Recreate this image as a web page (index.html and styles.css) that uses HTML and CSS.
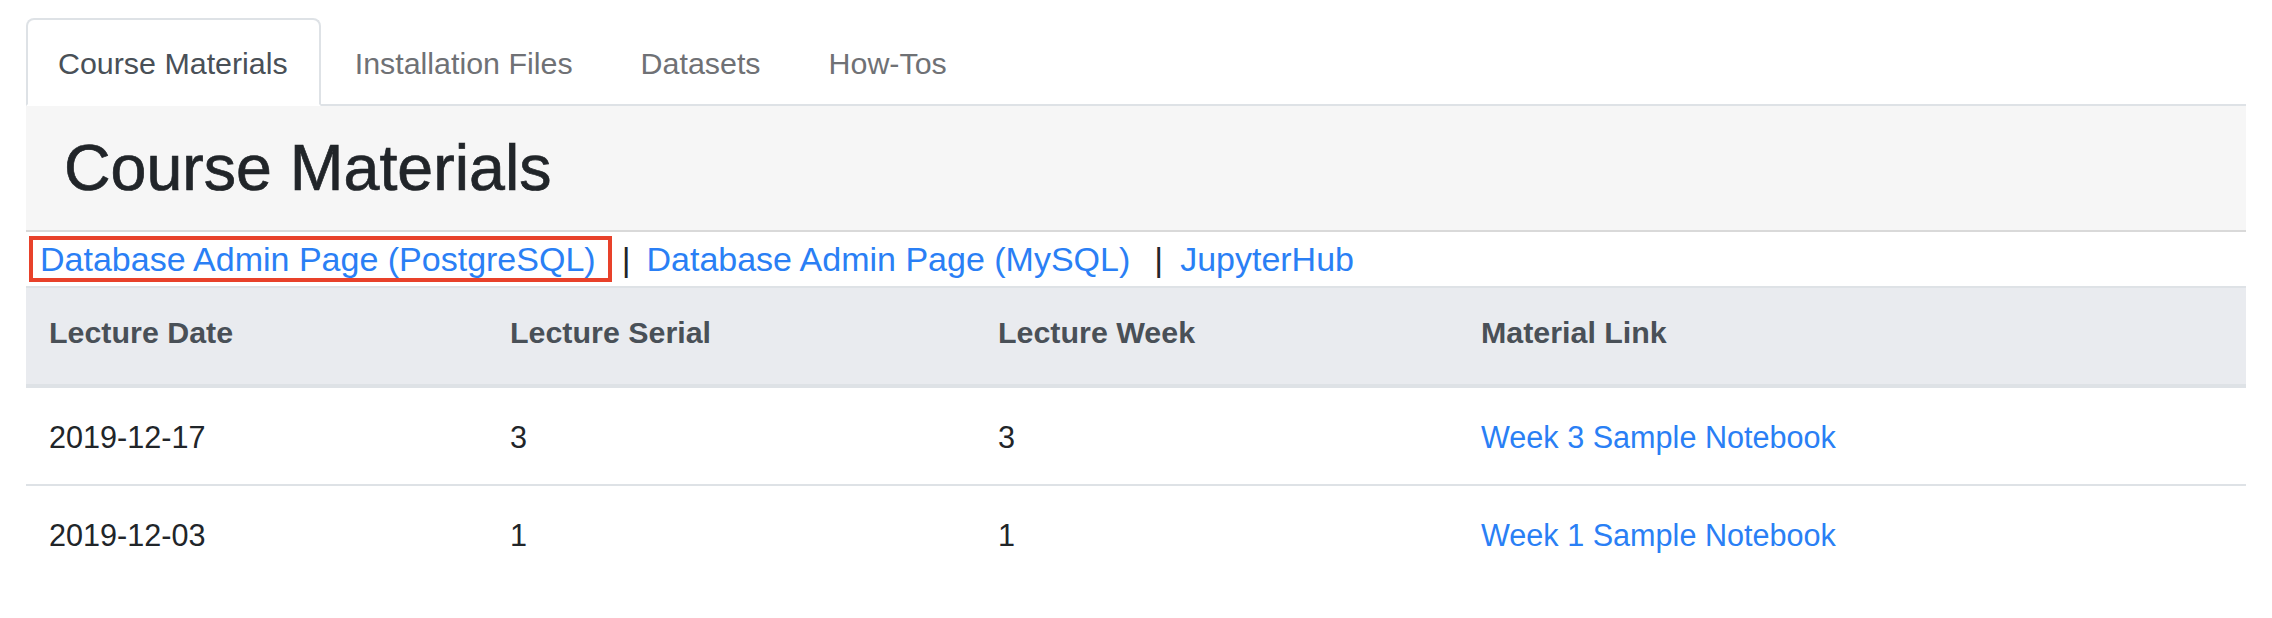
FILE: index.html
```html
<!DOCTYPE html>
<html lang="en">
<head>
<meta charset="utf-8">
<title>Course Materials</title>
<link rel="stylesheet" href="styles.css">
</head>
<body>
<div class="page">
  <ul class="tabs">
    <li class="tab"><a class="tab-link active" href="#">Course Materials</a></li>
    <li class="tab"><a class="tab-link" href="#">Installation Files</a></li>
    <li class="tab"><a class="tab-link" href="#">Datasets</a></li>
    <li class="tab"><a class="tab-link" href="#">How-Tos</a></li>
  </ul>
  <div class="jumbo">
    <h1 class="jumbo-title">Course Materials</h1>
  </div>
  <div class="links">
    <span class="highlight"><a class="link" href="#">Database Admin Page (PostgreSQL)</a></span>
    <span class="sep sep-first">|</span>
    <a class="link" href="#">Database Admin Page (MySQL)</a>
    <span class="sep">|</span>
    <a class="link" href="#">JupyterHub</a>
  </div>
  <table class="materials">
    <colgroup>
      <col class="c-date">
      <col class="c-serial">
      <col class="c-week">
      <col class="c-link">
    </colgroup>
    <thead>
      <tr>
        <th>Lecture Date</th>
        <th>Lecture Serial</th>
        <th>Lecture Week</th>
        <th>Material Link</th>
      </tr>
    </thead>
    <tbody>
      <tr>
        <td>2019-12-17</td>
        <td>3</td>
        <td>3</td>
        <td><a class="cell-link" href="#">Week 3 Sample Notebook</a></td>
      </tr>
      <tr>
        <td>2019-12-03</td>
        <td>1</td>
        <td>1</td>
        <td><a class="cell-link" href="#">Week 1 Sample Notebook</a></td>
      </tr>
    </tbody>
  </table>
</div>
</body>
</html>
```
FILE: styles.css
```css
* { box-sizing: border-box; }
html, body {
  margin: 0;
  padding: 0;
  background: #ffffff;
}
body {
  font-family: "Liberation Sans", Arial, sans-serif;
  font-size: 30.4px;
  color: #212529;
}
.page {
  padding: 18px 26px 0 26px;
}
.tabs {
  list-style: none;
  margin: 0;
  padding: 0;
  display: flex;
  border-bottom: 2px solid #dee2e6;
}
.tab {
  margin-bottom: -2px;
}
.tab-link {
  display: block;
  padding: 21px 32px 19px 32px;
  line-height: 44px;
  border: 2px solid transparent;
  border-radius: 8px 8px 0 0;
  color: #6f7175;
  text-decoration: none;
}
.tab-link.active {
  color: #495057;
  background: #ffffff;
  border-color: #dee2e6 #dee2e6 #ffffff;
  padding-left: 30px;
  padding-right: 31px;
}
.jumbo {
  background: #f6f6f6;
  border-bottom: 2px solid #d9d9d9;
  padding: 24px 38px;
}
.jumbo-title {
  margin: 0;
  font-size: 64.5px;
  font-weight: 500;
  line-height: 76px;
  color: #212529;
  -webkit-text-stroke: 0.7px #212529;
}
.links {
  display: flex;
  align-items: center;
  height: 54px;
  font-size: 34px;
}
.highlight {
  display: inline-block;
  margin-left: 3px;
  border: 4px solid #e8412a;
  padding: 0 12px 0 7px;
  line-height: 38px;
}
.link {
  color: #2a7ff5;
  text-decoration: none;
  line-height: 38px;
}
.sep {
  line-height: 38px;
  color: #212529;
  margin: 0 17px 0 24px;
}
.sep-first {
  margin: 0 16px 0 10px;
}
.materials {
  width: 100%;
  table-layout: fixed;
  border-collapse: separate;
  border-spacing: 0;
}
.c-date { width: 461px; }
.c-serial { width: 488px; }
.c-week { width: 483px; }
.c-link { width: auto; }
.materials th {
  text-align: left;
  font-weight: 700;
  color: #495057;
  background: #e9ebef;
  border-top: 2px solid #dee2e6;
  border-bottom: 4px solid #dee2e6;
  padding: 21px 23px 29px 23px;
  line-height: 46px;
}
.materials td {
  padding: 26px 23px 24px 23px;
  line-height: 46px;
  font-size: 30.6px;
  color: #212529;
}
.materials tbody tr + tr td {
  border-top: 2px solid #dee2e6;
}
.cell-link {
  color: #2a7ff5;
  text-decoration: none;
}
```
